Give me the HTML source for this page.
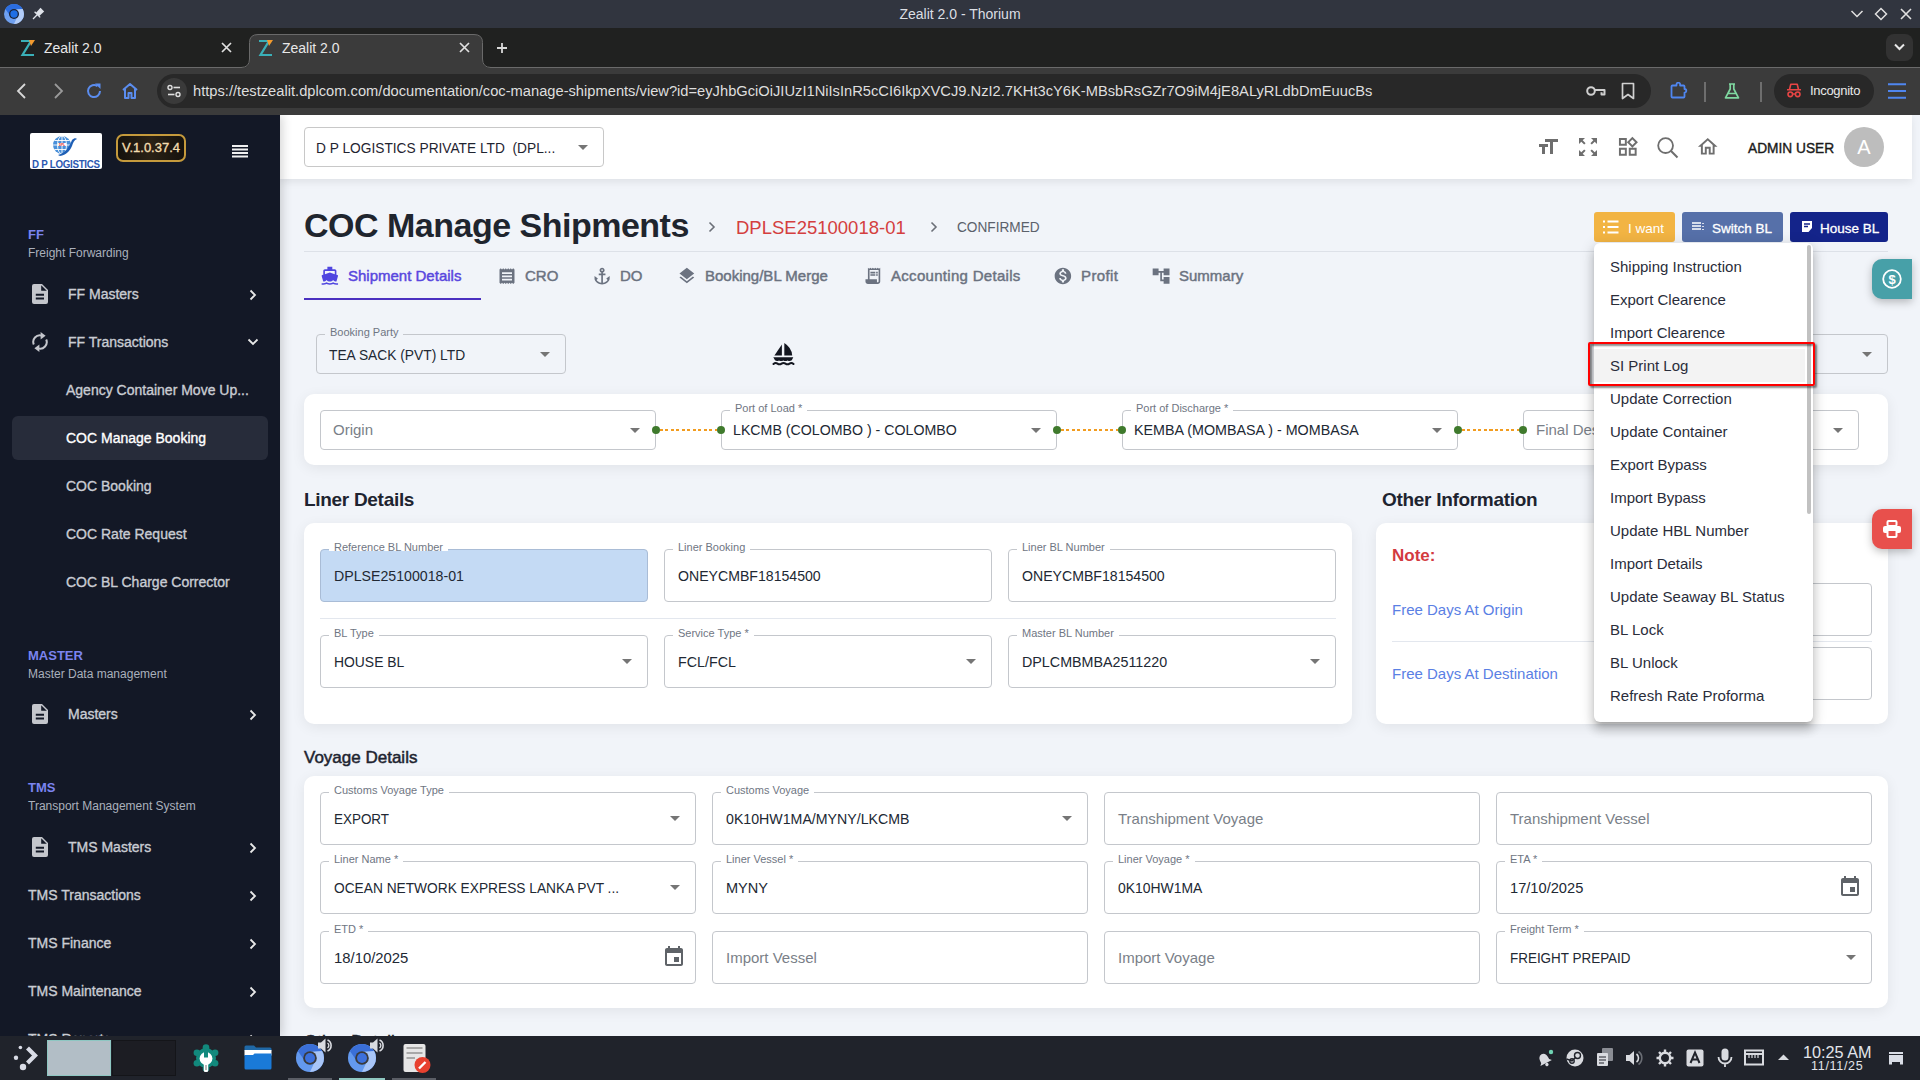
<!DOCTYPE html>
<html><head><meta charset="utf-8">
<style>
*{box-sizing:border-box;margin:0;padding:0}
html,body{width:1920px;height:1080px;overflow:hidden;background:#f1f4f9;font-family:"Liberation Sans",sans-serif}
.a{position:absolute}
svg{display:block}
/* chrome */
#titlebar{left:0;top:0;width:1920px;height:28px;background:#31353f}
#tabbar{left:0;top:28px;width:1920px;height:40px;background:#202120}
#toolbar{left:0;top:68px;width:1920px;height:47px;background:#3b3b3b}
#content{left:0;top:115px;width:1920px;height:921px;background:#f1f4f9;overflow:hidden}
#taskbar{left:0;top:1036px;width:1920px;height:44px;background:#20232b}
.wt{color:#e6e6e6;font-size:13px}
/* sidebar */
#sidebar{left:0;top:0;width:280px;height:921px;background:#131826;box-shadow:2px 0 10px rgba(0,0,0,0.18)}
.sec{left:28px;color:#7b84f0;font-weight:bold;font-size:13px}
.secsub{left:28px;color:#aab0bc;font-size:12px}
.si{color:#c9ccd3;font-size:14px;white-space:nowrap;-webkit-text-stroke:0.35px currentColor}
.chev{left:249px}
/* main */
.lbl{font-size:11px;color:#6f7683;background:#fff;padding:0 4px;white-space:nowrap}
.fld{border:1px solid #c4c7cc;border-radius:4px;background:#fff}
.val{font-size:15px;color:#212833;white-space:nowrap}
.ph{font-size:15px;color:#7a7f88;white-space:nowrap}
.caret{width:0;height:0;border-left:6px solid transparent;border-right:6px solid transparent;border-top:6px solid #666}
.card{background:#fff;border-radius:10px}
.h2{font-size:19px;font-weight:bold;color:#1e2430;white-space:nowrap}
.tab{font-size:15px;color:#6b7280;white-space:nowrap;-webkit-text-stroke:0.45px currentColor}
.mi{left:16px;font-size:15px;color:#2a2d3a;white-space:nowrap}
</style></head><body>

<!-- ================= TITLE BAR ================= -->
<div id="titlebar" class="a">
  <svg class="a" style="left:4px;top:4px" width="20" height="20" viewBox="0 0 28 28"><circle cx="14" cy="14" r="14" fill="#6fa0f0"/><path d="M26.1 7 A14 14 0 0 0 1.9 7 L10.7 19.7 L14 14 L10.7 8.3 Z" fill="#2b6de0"/><path d="M26.1 7 A14 14 0 0 1 14 28 L20.6 14 L14 14 L10.7 8.3 Z" fill="#b3cdf8"/><circle cx="14" cy="14" r="7" fill="#1a2233"/><circle cx="14" cy="14" r="5.2" fill="#1f6fe5"/></svg>
  <svg class="a" style="left:32px;top:7px" width="13" height="13" viewBox="0 0 13 13"><path d="M8.5 0.8 L12.2 4.5 L7 9.2 L3.8 6 Z" fill="#dfe3ea"/><path d="M2.6 4.8 L8.2 10.4 M5.2 7.8 L1 12" stroke="#dfe3ea" stroke-width="1.3"/></svg>
  <div class="a wt" style="left:0;width:1920px;top:6px;text-align:center;font-size:14px;color:#dcdfe4">Zealit 2.0 - Thorium</div>
  <svg class="a" style="left:1850px;top:8px" width="14" height="12" viewBox="0 0 14 12"><path d="M1.5 3 L7 8.5 L12.5 3" stroke="#e0e0e0" stroke-width="1.5" fill="none"/></svg>
  <svg class="a" style="left:1874px;top:7px" width="14" height="14" viewBox="0 0 14 14"><path d="M7 1.5 L12.5 7 L7 12.5 L1.5 7 Z" stroke="#e0e0e0" stroke-width="1.5" fill="none"/></svg>
  <svg class="a" style="left:1899px;top:7px" width="14" height="14" viewBox="0 0 14 14"><path d="M2 2 L12 12 M12 2 L2 12" stroke="#e0e0e0" stroke-width="1.6" fill="none"/></svg>
</div>

<!-- ================= TAB BAR ================= -->
<div id="tabbar" class="a">
  <svg class="a" style="left:0;top:0" width="1920" height="40" viewBox="0 0 1920 40"><path d="M0 39.5 H242" stroke="#6a6a6a" stroke-width="1"/><path d="M490 39.5 H1920" stroke="#6a6a6a" stroke-width="1"/><path d="M241 40 Q250 40 250 31 V14.5 Q250 6.5 258 6.5 H474 Q482 6.5 482 14.5 V31 Q482 40 491 40 Z" fill="#3b3b3b"/><path d="M241 39.5 Q249.5 39.5 249.5 31 V14.5 Q249.5 6.5 258 6.5 H474 Q482.5 6.5 482.5 14.5 V31 Q482.5 39.5 491 39.5" stroke="#6a6a6a" stroke-width="1" fill="none"/></svg>
  <!-- favicon Z -->
  <svg class="a" style="left:20px;top:11px" width="16" height="18" viewBox="0 0 16 18"><path d="M1 2 H11 L2.5 16 H14" stroke="#3ab0b8" stroke-width="2.2" fill="none"/><path d="M9 1 H15 L11 7 Z" fill="#f29a2e"/></svg>
  <div class="a wt" style="left:44px;top:12px;font-size:14px;color:#e8e8e8">Zealit 2.0</div>
  <svg class="a" style="left:220px;top:13px" width="13" height="13" viewBox="0 0 13 13"><path d="M2 2 L11 11 M11 2 L2 11" stroke="#e0e0e0" stroke-width="1.7"/></svg>
  <svg class="a" style="left:258px;top:11px" width="16" height="18" viewBox="0 0 16 18"><path d="M1 2 H11 L2.5 16 H14" stroke="#3ab0b8" stroke-width="2.2" fill="none"/><path d="M9 1 H15 L11 7 Z" fill="#f29a2e"/></svg>
  <div class="a wt" style="left:282px;top:12px;font-size:14px;color:#e8e8e8">Zealit 2.0</div>
  <svg class="a" style="left:458px;top:13px" width="13" height="13" viewBox="0 0 13 13"><path d="M2 2 L11 11 M11 2 L2 11" stroke="#e0e0e0" stroke-width="1.7"/></svg>
  <svg class="a" style="left:497px;top:15px" width="10" height="10" viewBox="0 0 10 10"><path d="M5 0 V10 M0 5 H10" stroke="#d8d8d8" stroke-width="1.8"/></svg>
  <div class="a" style="left:1886px;top:6px;width:27px;height:27px;background:#323232;border-radius:8px"></div>
  <svg class="a" style="left:1893px;top:14px" width="13" height="10" viewBox="0 0 13 10"><path d="M2 2.5 L6.5 7 L11 2.5" stroke="#e8e8e8" stroke-width="2" fill="none"/></svg>
</div>

<!-- ================= TOOLBAR ================= -->
<div id="toolbar" class="a">
  <svg class="a" style="left:14px;top:14px" width="16" height="18" viewBox="0 0 16 18"><path d="M11 2 L4 9 L11 16" stroke="#d8d8d8" stroke-width="1.8" fill="none"/></svg>
  <svg class="a" style="left:50px;top:14px" width="16" height="18" viewBox="0 0 16 18"><path d="M5 2 L12 9 L5 16" stroke="#9a9a9a" stroke-width="1.8" fill="none"/></svg>
  <svg class="a" style="left:84px;top:13px" width="20" height="20" viewBox="0 0 20 20"><path d="M16 10 A6 6 0 1 1 13.5 5.2" stroke="#5b8def" stroke-width="2" fill="none"/><path d="M11 2.5 H16.5 V8 Z" fill="#5b8def"/></svg>
  <svg class="a" style="left:120px;top:13px" width="20" height="20" viewBox="0 0 20 20"><path d="M3 9 L10 3 L17 9 M5 8 V17 H8.5 V12 H11.5 V17 H15 V8" stroke="#5b8def" stroke-width="2" fill="none" stroke-linejoin="round"/></svg>
  <div class="a" style="left:157px;top:6px;width:1494px;height:34px;background:#282828;border-radius:17px"></div>
  <div class="a" style="left:161px;top:10px;width:26px;height:26px;background:#3a3a3a;border-radius:13px"></div>
  <svg class="a" style="left:166px;top:15px" width="16" height="16" viewBox="0 0 16 16"><circle cx="4" cy="4.5" r="2" stroke="#e0e0e0" stroke-width="1.4" fill="none"/><path d="M7.5 4.5 H14" stroke="#e0e0e0" stroke-width="1.6"/><circle cx="12" cy="11.5" r="2" stroke="#e0e0e0" stroke-width="1.4" fill="none"/><path d="M2 11.5 H8.5" stroke="#e0e0e0" stroke-width="1.6"/></svg>
  <div class="a" style="left:193px;top:15px;font-size:14.7px;color:#dedede;white-space:nowrap">https://testzealit.dplcom.com/documentation/coc-manage-shipments/view?id=eyJhbGciOiJIUzI1NiIsInR5cCI6IkpXVCJ9.NzI2.7KHt3cY6K-MBsbRsGZr7O9iM4jE8ALyRLdbDmEuucBs</div>
  <svg class="a" style="left:1586px;top:17px" width="20" height="12" viewBox="0 0 20 12"><circle cx="5" cy="6" r="3.8" stroke="#d0d0d0" stroke-width="2" fill="none"/><path d="M8.8 5 H18.5 V9.5 H15.5 V7.2" stroke="#d0d0d0" stroke-width="2" fill="none" stroke-linejoin="round"/></svg>
  <svg class="a" style="left:1621px;top:14px" width="14" height="18" viewBox="0 0 14 18"><path d="M1.5 1.5 H12.5 V16.5 L7 12.5 L1.5 16.5 Z" stroke="#d0d0d0" stroke-width="1.7" fill="none" stroke-linejoin="round"/></svg>
  <svg class="a" style="left:1670px;top:14px" width="18" height="17" viewBox="0 0 18 17"><path d="M2.5 3.5 H6.5 V2.5 A1.8 1.8 0 0 1 10.1 2.5 V3.5 H13.5 A1.2 1.2 0 0 1 14.5 4.5 V7 A1.8 1.8 0 0 1 14.5 10.6 V14.5 A1.2 1.2 0 0 1 13.5 15.5 H2.5 A1.2 1.2 0 0 1 1.5 14.5 V4.5 A1.2 1.2 0 0 1 2.5 3.5 Z" stroke="#4f86f0" stroke-width="1.8" fill="none" stroke-linejoin="round"/></svg>
  <div class="a" style="left:1704px;top:14px;width:2px;height:20px;background:#6e6e6e"></div>
  <svg class="a" style="left:1724px;top:15px" width="16" height="16" viewBox="0 0 16 16"><path d="M5 1 H11 M6.2 1 V6 L1.5 14.8 H14.5 L9.8 6 V1 M3.8 10.5 H12.2" stroke="#7fd8a0" stroke-width="1.7" fill="none" stroke-linejoin="round"/></svg>
  <div class="a" style="left:1760px;top:14px;width:2px;height:20px;background:#6e6e6e"></div>
  <div class="a" style="left:1774px;top:6px;width:100px;height:34px;background:#282828;border-radius:17px"></div>
  <svg class="a" style="left:1786px;top:15px" width="16" height="15" viewBox="0 0 16 15"><path d="M3.5 6.5 L4.8 1.2 H11.2 L12.5 6.5 M1 6.7 H15" stroke="#e84545" stroke-width="1.6" fill="none" stroke-linejoin="round"/><circle cx="4.3" cy="11.3" r="2.3" stroke="#e84545" stroke-width="1.6" fill="none"/><circle cx="11.7" cy="11.3" r="2.3" stroke="#e84545" stroke-width="1.6" fill="none"/><path d="M6.6 11 H9.4" stroke="#e84545" stroke-width="1.4"/></svg>
  <div class="a" style="left:1810px;top:15px;font-size:13px;line-height:15px;color:#e8e8e8;letter-spacing:-0.3px">Incognito</div>
  <svg class="a" style="left:1888px;top:14px" width="18" height="18" viewBox="0 0 18 18"><path d="M0 2.2 H18 M0 9 H18 M0 15.7 H18" stroke="#4f86f0" stroke-width="2"/></svg>
</div>

<!-- ================= CONTENT ================= -->
<div id="content" class="a">

  <!-- HEADER -->
  <div class="a" style="left:280px;top:0;width:1632px;height:64px;background:#fff;box-shadow:0 3px 8px rgba(0,0,0,0.08)"></div>
  <div class="a fld" style="left:304px;top:12px;width:300px;height:40px;border-color:#c8c8c8;border-radius:4px"></div>
  <div class="a val" style="left:316px;top:25px;font-size:15px;line-height:15px;color:#1f2430;transform:scaleX(0.915);transform-origin:0 0">D P LOGISTICS PRIVATE LTD &nbsp;(DPL...</div>
  <div class="a caret" style="left:578px;top:30px;border-top-color:#757575;border-left-width:5px;border-right-width:5px;border-top-width:5px"></div>
  <!-- header icons -->
  <svg class="a" style="left:1536px;top:20px" width="24" height="24" viewBox="0 0 24 24"><path fill="#6e6e6e" d="M9 4v3h5v12h3V7h5V4H9zm-6 8h3v7h3v-7h3V9H3v3z"/></svg>
  <svg class="a" style="left:1576px;top:20px" width="24" height="24" viewBox="0 0 24 24"><path fill="#6e6e6e" d="M15 3l2.3 2.3-2.89 2.87 1.42 1.42L18.7 6.7 21 9V3zM3 9l2.3-2.3 2.87 2.89 1.42-1.42L6.7 5.3 9 3H3zm6 12l-2.3-2.3 2.89-2.87-1.42-1.42L5.3 17.3 3 15v6zm12-6l-2.3 2.3-2.87-2.89-1.42 1.42 2.89 2.87L15 21h6z"/></svg>
  <svg class="a" style="left:1616px;top:20.1px" width="23.6" height="23.6" viewBox="0 0 24 24"><path fill="#6e6e6e" d="M16.66 4.52l2.83 2.83-2.83 2.83-2.830-2.83 2.83-2.83M9 5v4H5V5h4m10 10v4h-4v-4h4M9 15v4H5v-4h4m7.66-13.31L11 7.34 16.66 13l5.66-5.66-5.66-5.65zM11 3H3v8h8V3zm10 10h-8v8h8v-8zm-10 0H3v8h8v-8z"/></svg>
  <svg class="a" style="left:1657px;top:21.5px" width="22" height="22" viewBox="0 0 22 22"><circle cx="8.6" cy="8.6" r="7.4" stroke="#6e6e6e" stroke-width="1.8" fill="none"/><path d="M13.8 13.8 L20.5 20.5" stroke="#6e6e6e" stroke-width="2"/></svg>
  <svg class="a" style="left:1696.3px;top:20.1px" width="23.5" height="23.5" viewBox="0 0 24 24"><path fill="#6e6e6e" d="M12 5.69l5 4.5V18h-2v-6H9v6H7v-7.81l5-4.5M12 3L2 12h3v8h6v-6h2v6h6v-8h3L12 3z"/></svg>
  <div class="a" style="left:1748px;top:25px;font-size:15px;line-height:15px;color:#1a1a1a;white-space:nowrap;transform:scaleX(0.915);transform-origin:0 0;-webkit-text-stroke:0.4px currentColor">ADMIN USER</div>
  <div class="a" style="left:1844px;top:12px;width:40px;height:40px;border-radius:20px;background:#bdbdbd;color:#fff;font-size:20px;line-height:40px;text-align:center">A</div>

  <!-- TITLE -->
  <div class="a" style="left:304px;top:93px;font-size:34px;line-height:34px;font-weight:bold;color:#1f252e;white-space:nowrap;letter-spacing:-0.5px">COC Manage Shipments</div>
  <svg class="a" style="left:708px;top:106px" width="8" height="12" viewBox="0 0 8 12"><path d="M1.5 1.5 L6 6 L1.5 10.5" stroke="#6b6f78" stroke-width="1.6" fill="none"/></svg>
  <div class="a" style="left:736px;top:103px;font-size:18.5px;line-height:19px;color:#d43f3f;white-space:nowrap">DPLSE25100018-01</div>
  <svg class="a" style="left:930px;top:106px" width="8" height="12" viewBox="0 0 8 12"><path d="M1.5 1.5 L6 6 L1.5 10.5" stroke="#6b6f78" stroke-width="1.6" fill="none"/></svg>
  <div class="a" style="left:957px;top:104px;font-size:15.5px;line-height:15px;color:#5b616b;white-space:nowrap;transform:scaleX(0.881);transform-origin:0 0">CONFIRMED</div>
  <div class="a" style="left:304px;top:136px;width:1584px;height:1px;background:#dde1e8"></div>

  <!-- action buttons -->
  <div class="a" style="left:1594px;top:97px;width:81px;height:30px;background:#f2b443;border-radius:3px"></div>
  <svg class="a" style="left:1603px;top:105px" width="16" height="14" viewBox="0 0 16 14"><path d="M0 1.5 H2 M0 7 H2 M0 12.5 H2 M4.5 1.5 H15.5 M4.5 7 H15.5 M4.5 12.5 H15.5" stroke="#fff" stroke-width="1.8"/></svg>
  <div class="a" style="left:1628px;top:106px;font-size:13.5px;line-height:15px;color:#fff;white-space:nowrap">I want</div>
  <div class="a" style="left:1682px;top:97px;width:101px;height:30px;background:#5670a9;border-radius:3px"></div>
  <svg class="a" style="left:1692px;top:107px" width="13" height="10" viewBox="0 0 13 10"><path d="M0 1 H9 M0 4 H9 M0 7 H9 M11 1 V2 M11 4 V5 M11 7 V8" stroke="#fff" stroke-width="1.5"/></svg>
  <div class="a" style="left:1712px;top:106px;font-size:13.5px;line-height:15px;color:#fff;white-space:nowrap;-webkit-text-stroke:0.3px currentColor">Switch BL</div>
  <div class="a" style="left:1790px;top:97px;width:98px;height:30px;background:#14248a;border-radius:3px"></div>
  <svg class="a" style="left:1801px;top:105px" width="12" height="13" viewBox="0 0 12 13"><path d="M1 1 H11 V8 L7.5 12 H1 Z" fill="#fff"/><path d="M3 4 H9 M3 6.5 H7" stroke="#14248a" stroke-width="1.3"/></svg>
  <div class="a" style="left:1820px;top:106px;font-size:13.5px;line-height:15px;color:#fff;white-space:nowrap;-webkit-text-stroke:0.3px currentColor">House BL</div>

  <!-- TABS -->
  <svg class="a" style="left:319.9px;top:151.1px" width="19.7" height="19.7" viewBox="0 0 24 24"><path fill="#4f45e0" d="M20 21c-1.39 0-2.78-.47-4-1.32-2.44 1.71-5.56 1.71-8 0C6.78 20.53 5.39 21 4 21H2v2h2c1.38 0 2.74-.35 4-.99 2.52 1.29 5.48 1.29 8 0 1.26.65 2.62.99 4 .99h2v-2h-2zM3.95 19H4c1.6 0 3.02-.88 4-2 .98 1.12 2.4 2 4 2s3.02-.88 4-2c.98 1.12 2.4 2 4 2h.05l1.89-6.68c.08-.26.06-.54-.06-.78s-.34-.42-.6-.5L20 10.62V6c0-1.1-.9-2-2-2h-3V1H9v3H6c-1.1 0-2 .9-2 2v4.62l-1.29.42c-.26.08-.48.26-.6.5s-.15.52-.06.78L3.95 19zM6 6h12v3.97L12 8 6 9.97V6z"/></svg>
  <div class="a tab" style="left:348px;top:152.5px;line-height:15px;color:#5846de">Shipment Details</div>
  <div class="a" style="left:304px;top:183px;width:177px;height:2px;background:#4a30c0"></div>

  <svg class="a" style="left:499.2px;top:152.7px" width="16" height="16.3" viewBox="0 0 16 16.3"><path d="M0.5 1.5 L1.75 0.3 L3 1.5 L4.25 0.3 L5.5 1.5 L6.75 0.3 L8 1.5 L9.25 0.3 L10.5 1.5 L11.75 0.3 L13 1.5 L14.25 0.3 L15.5 1.5 V14.8 L14.25 16 L13 14.8 L11.75 16 L10.5 14.8 L9.25 16 L8 14.8 L6.75 16 L5.5 14.8 L4.25 16 L3 14.8 L1.75 16 L0.5 14.8 Z" fill="#6b7280"/><path d="M3 5.1 H13 M3 8.4 H13 M3 11.6 H13" stroke="#f1f4f9" stroke-width="1.6"/></svg>
  <div class="a tab" style="left:525px;top:152.5px;line-height:15px">CRO</div>
  <svg class="a" style="left:591.8px;top:151.2px" width="20.2" height="20.2" viewBox="0 0 24 24"><path fill="#6b7280" d="M17,15l1.55,1.55c-0.96,1.69-3.33,3.04-5.55,3.37V11h3V9h-3V7.82C14.16,7.4,15,6.3,15,5c0-1.65-1.35-3-3-3S9,3.35,9,5c0,1.3,0.84,2.4,2,2.82V9H8v2h3v8.92c-2.22-0.33-4.59-1.68-5.55-3.37L7,15l-4-3v3c0,3.88,4.92,7,9,7s9-3.12,9-7v-3L17,15z M12,4c0.55,0,1,0.45,1,1s-0.45,1-1,1s-1-0.45-1-1S11.45,4,12,4z"/></svg>
  <div class="a tab" style="left:620px;top:152.5px;line-height:15px">DO</div>
  <svg class="a" style="left:677.1px;top:151.3px" width="19.7" height="19.7" viewBox="0 0 24 24"><path fill="#6b7280" d="M11.99 18.54l-7.37-5.73L3 14.07l9 7 9-7-1.63-1.27-7.38 5.74zM12 16l7.36-5.73L21 9l-9-7-9 7 1.63 1.27L12 16z"/></svg>
  <div class="a tab" style="left:705px;top:152.5px;line-height:15px">Booking/BL Merge</div>
  <svg class="a" style="left:862.7px;top:151.1px" width="19.7" height="19.7" viewBox="0 0 24 24"><path fill="#6b7280" d="M19.5 3.5L18 2l-1.5 1.5L15 2l-1.5 1.5L12 2l-1.5 1.5L9 2 7.5 3.5 6 2v14H3v3c0 1.66 1.34 3 3 3h12c1.66 0 3-1.34 3-3V2l-1.5 1.5zM19 19c0 .55-.45 1-1 1s-1-.45-1-1v-3H8V5h11v14z M9 7h6v2H9zM16 7h2v2h-2zM9 10h6v2H9zM16 10h2v2h-2z"/></svg>
  <div class="a tab" style="left:891px;top:152.5px;line-height:15px;letter-spacing:0.3px">Accounting Details</div>
  <svg class="a" style="left:1053px;top:151.2px" width="19.8" height="19.8" viewBox="0 0 24 24"><path fill="#6b7280" d="M12 2C6.48 2 2 6.48 2 12s4.48 10 10 10 10-4.48 10-10S17.52 2 12 2zm1.41 16.09V20h-2.67v-1.93c-1.710-.36-3.16-1.46-3.27-3.4h1.96c.1 1.05.82 1.87 2.65 1.87 1.96 0 2.4-.98 2.4-1.59 0-.83-.44-1.61-2.67-2.14-2.48-.6-4.18-1.62-4.18-3.67 0-1.72 1.39-2.84 3.11-3.21V4h2.67v1.95c1.86.45 2.79 1.86 2.85 3.39H14.3c-.05-1.11-.64-1.870-2.22-1.87-1.5 0-2.4.68-2.4 1.64 0 .84.65 1.39 2.67 1.91s4.18 1.39 4.18 3.91c-.01 1.83-1.38 2.83-3.12 3.160z"/></svg>
  <div class="a tab" style="left:1081px;top:152.5px;line-height:15px;letter-spacing:0.4px">Profit</div>
  <svg class="a" style="left:1151.1px;top:150.7px" width="20.2" height="20.2" viewBox="0 0 24 24"><path fill="#6b7280" d="M22 11V3h-7v3H9V3H2v8h7V8h2v10h4v3h7v-8h-7v3h-2V8h2v3z"/></svg>
  <div class="a tab" style="left:1179px;top:152.5px;line-height:15px">Summary</div>
<div class="a fld" style="left:316px;top:219px;width:250px;height:40px;background:transparent;border-color:#c4c7cc"></div><div class="a" style="left:325px;top:218px;width:78.484375px;height:3px;background:#f1f4f9"></div><div class="a lbl" style="left:325px;top:211.2px;line-height:12px;background:transparent;padding:0 5px">Booking Party</div><div class="a val" style="left:329px;top:232.0px;line-height:16px;transform:scaleX(0.919);transform-origin:0 0">TEA SACK (PVT) LTD</div><div class="a caret" style="left:540px;top:236.5px;border-left-width:5px;border-right-width:5px;border-top-width:5px;border-top-color:#757575"></div>
<svg class="a" style="left:772px;top:227px" width="23" height="24" viewBox="0 0 23 24"><path d="M9.9 2.6 L2.4 13.4 H9.9 Z" fill="#12151f"/><path d="M12.3 1.1 Q19.5 5.5 20.2 13.4 H12.3 Z" fill="#12151f"/><path d="M1.3 15.2 H21.3 L19.8 18.2 Q17.7 19.6 15.6 18.4 Q13.5 19.6 11.3 18.4 Q9.1 19.6 7 18.4 Q4.9 19.6 3 18.3 Z" fill="#12151f"/><path d="M1.5 22 Q3.5 20.2 5.5 21.6 T9.5 21.6 T13.5 21.6 T17.5 21.6 T21.5 22" stroke="#12151f" stroke-width="2" fill="none" stroke-linecap="round"/></svg>
<div class="a fld" style="left:1638px;top:219px;width:250px;height:40px;background:transparent;border-color:#c4c7cc"></div><div class="a caret" style="left:1862px;top:236.5px;border-left-width:5px;border-right-width:5px;border-top-width:5px;border-top-color:#757575"></div>
<div class="a card" style="left:304px;top:279px;width:1584px;height:71px;box-shadow:0 3px 14px rgba(0,0,0,0.07)"></div>
<div class="a fld" style="left:320px;top:295px;width:336px;height:40px;background:#fff;border-color:#c4c7cc"></div><div class="a ph" style="left:333px;top:306.5px;line-height:16px">Origin</div><div class="a caret" style="left:630px;top:312.5px;border-left-width:5px;border-right-width:5px;border-top-width:5px;border-top-color:#757575"></div>
<div class="a fld" style="left:721px;top:295px;width:336px;height:40px;background:#fff;border-color:#c4c7cc"></div><div class="a" style="left:730px;top:294px;width:77.28125px;height:3px;background:#fff"></div><div class="a lbl" style="left:730px;top:287.2px;line-height:12px;background:transparent;padding:0 5px">Port of Load *</div><div class="a val" style="left:733px;top:307.0px;line-height:16px;transform:scaleX(0.9454);transform-origin:0 0">LKCMB (COLOMBO ) - COLOMBO</div><div class="a caret" style="left:1031px;top:312.5px;border-left-width:5px;border-right-width:5px;border-top-width:5px;border-top-color:#757575"></div>
<div class="a fld" style="left:1122px;top:295px;width:336px;height:40px;background:#fff;border-color:#c4c7cc"></div><div class="a" style="left:1131px;top:294px;width:102.328125px;height:3px;background:#fff"></div><div class="a lbl" style="left:1131px;top:287.2px;line-height:12px;background:transparent;padding:0 5px">Port of Discharge *</div><div class="a val" style="left:1134px;top:307.0px;line-height:16px;transform:scaleX(0.953);transform-origin:0 0">KEMBA (MOMBASA ) - MOMBASA</div><div class="a caret" style="left:1432px;top:312.5px;border-left-width:5px;border-right-width:5px;border-top-width:5px;border-top-color:#757575"></div>
<div class="a fld" style="left:1523px;top:295px;width:336px;height:40px;background:#fff;border-color:#c4c7cc"></div><div class="a ph" style="left:1536px;top:306.5px;line-height:16px">Final Destination</div><div class="a caret" style="left:1833px;top:312.5px;border-left-width:5px;border-right-width:5px;border-top-width:5px;border-top-color:#757575"></div>
<div class="a" style="left:660px;top:314px;width:57px;height:2px;background:repeating-linear-gradient(90deg,#f29c1f 0 3px,transparent 3px 5.5px)"></div>
<div class="a" style="left:652px;top:311px;width:8px;height:8px;border-radius:4px;background:#3f7a2c"></div>
<div class="a" style="left:717px;top:311px;width:8px;height:8px;border-radius:4px;background:#3f7a2c"></div>
<div class="a" style="left:1061px;top:314px;width:57px;height:2px;background:repeating-linear-gradient(90deg,#f29c1f 0 3px,transparent 3px 5.5px)"></div>
<div class="a" style="left:1053px;top:311px;width:8px;height:8px;border-radius:4px;background:#3f7a2c"></div>
<div class="a" style="left:1118px;top:311px;width:8px;height:8px;border-radius:4px;background:#3f7a2c"></div>
<div class="a" style="left:1462px;top:314px;width:57px;height:2px;background:repeating-linear-gradient(90deg,#f29c1f 0 3px,transparent 3px 5.5px)"></div>
<div class="a" style="left:1454px;top:311px;width:8px;height:8px;border-radius:4px;background:#3f7a2c"></div>
<div class="a" style="left:1519px;top:311px;width:8px;height:8px;border-radius:4px;background:#3f7a2c"></div>
<div class="a h2" style="left:304px;top:375px;line-height:19px;letter-spacing:-0.3px">Liner Details</div>
<div class="a card" style="left:304px;top:408px;width:1048px;height:201px;box-shadow:0 3px 14px rgba(0,0,0,0.07)"></div>
<div class="a fld" style="left:320px;top:434px;width:328px;height:53px;background:#c4daf4;border-color:#a9bcd6"></div><div class="a" style="left:329px;top:433px;width:119.046875px;height:3px;background:#fff"></div><div class="a lbl" style="left:329px;top:426.2px;line-height:12px;background:transparent;padding:0 5px">Reference BL Number</div><div class="a val" style="left:334px;top:452.5px;line-height:16px;transform:scaleX(0.9445);transform-origin:0 0">DPLSE25100018-01</div>
<div class="a fld" style="left:664px;top:434px;width:328px;height:53px;background:#fff;border-color:#c4c7cc"></div><div class="a" style="left:673px;top:433px;width:77.28125px;height:3px;background:#fff"></div><div class="a lbl" style="left:673px;top:426.2px;line-height:12px;background:transparent;padding:0 5px">Liner Booking</div><div class="a val" style="left:678px;top:452.5px;line-height:16px;transform:scaleX(0.9405);transform-origin:0 0">ONEYCMBF18154500</div>
<div class="a fld" style="left:1008px;top:434px;width:328px;height:53px;background:#fff;border-color:#c4c7cc"></div><div class="a" style="left:1017px;top:433px;width:92.75px;height:3px;background:#fff"></div><div class="a lbl" style="left:1017px;top:426.2px;line-height:12px;background:transparent;padding:0 5px">Liner BL Number</div><div class="a val" style="left:1022px;top:452.5px;line-height:16px;transform:scaleX(0.9405);transform-origin:0 0">ONEYCMBF18154500</div>
<div class="a" style="left:320px;top:503px;width:1016px;height:1px;background:#e3e7ee"></div>
<div class="a fld" style="left:320px;top:520px;width:328px;height:53px;background:#fff;border-color:#c4c7cc"></div><div class="a" style="left:329px;top:519px;width:49.765625px;height:3px;background:#fff"></div><div class="a lbl" style="left:329px;top:512.2px;line-height:12px;background:transparent;padding:0 5px">BL Type</div><div class="a val" style="left:334px;top:538.5px;line-height:16px;transform:scaleX(0.926);transform-origin:0 0">HOUSE BL</div><div class="a caret" style="left:622px;top:544.0px;border-left-width:5px;border-right-width:5px;border-top-width:5px;border-top-color:#757575"></div>
<div class="a fld" style="left:664px;top:520px;width:328px;height:53px;background:#fff;border-color:#c4c7cc"></div><div class="a" style="left:673px;top:519px;width:80.734375px;height:3px;background:#fff"></div><div class="a lbl" style="left:673px;top:512.2px;line-height:12px;background:transparent;padding:0 5px">Service Type *</div><div class="a val" style="left:678px;top:538.5px;line-height:16px;transform:scaleX(0.9513);transform-origin:0 0">FCL/FCL</div><div class="a caret" style="left:966px;top:544.0px;border-left-width:5px;border-right-width:5px;border-top-width:5px;border-top-color:#757575"></div>
<div class="a fld" style="left:1008px;top:520px;width:328px;height:53px;background:#fff;border-color:#c4c7cc"></div><div class="a" style="left:1017px;top:519px;width:101.90625px;height:3px;background:#fff"></div><div class="a lbl" style="left:1017px;top:512.2px;line-height:12px;background:transparent;padding:0 5px">Master BL Number</div><div class="a val" style="left:1022px;top:538.5px;line-height:16px;transform:scaleX(0.9532);transform-origin:0 0">DPLCMBMBA2511220</div><div class="a caret" style="left:1310px;top:544.0px;border-left-width:5px;border-right-width:5px;border-top-width:5px;border-top-color:#757575"></div>
<div class="a h2" style="left:1382px;top:375px;line-height:19px;letter-spacing:-0.3px">Other Information</div>
<div class="a card" style="left:1376px;top:408px;width:512px;height:201px;box-shadow:0 3px 14px rgba(0,0,0,0.07)"></div>
<div class="a" style="left:1392px;top:432px;font-size:17px;line-height:17px;font-weight:bold;color:#d33a3f">Note:</div>
<div class="a" style="left:1392px;top:487px;font-size:15px;line-height:16px;color:#5a80e4;white-space:nowrap">Free Days At Origin</div>
<div class="a" style="left:1392px;top:526px;width:480px;height:1px;background:#e3e7ee"></div>
<div class="a" style="left:1392px;top:551px;font-size:15px;line-height:16px;color:#5a80e4;white-space:nowrap">Free Days At Destination</div>
<div class="a fld" style="left:1630px;top:468px;width:242px;height:53px"></div>
<div class="a fld" style="left:1630px;top:532px;width:242px;height:53px"></div>
<div class="a" style="left:304px;top:634px;font-size:17px;line-height:17px;color:#1e2430;white-space:nowrap;-webkit-text-stroke:0.5px currentColor">Voyage Details</div>
<div class="a card" style="left:304px;top:661px;width:1584px;height:232px;box-shadow:0 3px 14px rgba(0,0,0,0.07)"></div>
<div class="a fld" style="left:320px;top:677px;width:376px;height:53px;background:#fff;border-color:#c4c7cc"></div><div class="a" style="left:329px;top:676px;width:119.875px;height:3px;background:#fff"></div><div class="a lbl" style="left:329px;top:669.2px;line-height:12px;background:transparent;padding:0 5px">Customs Voyage Type</div><div class="a val" style="left:334px;top:695.5px;line-height:16px;transform:scaleX(0.8964);transform-origin:0 0">EXPORT</div><div class="a caret" style="left:670px;top:701.0px;border-left-width:5px;border-right-width:5px;border-top-width:5px;border-top-color:#757575"></div>
<div class="a fld" style="left:712px;top:677px;width:376px;height:53px;background:#fff;border-color:#c4c7cc"></div><div class="a" style="left:721px;top:676px;width:93.15625px;height:3px;background:#fff"></div><div class="a lbl" style="left:721px;top:669.2px;line-height:12px;background:transparent;padding:0 5px">Customs Voyage</div><div class="a val" style="left:726px;top:695.5px;line-height:16px;transform:scaleX(0.9448);transform-origin:0 0">0K10HW1MA/MYNY/LKCMB</div><div class="a caret" style="left:1062px;top:701.0px;border-left-width:5px;border-right-width:5px;border-top-width:5px;border-top-color:#757575"></div>
<div class="a fld" style="left:1104px;top:677px;width:376px;height:53px;background:#fff;border-color:#c4c7cc"></div><div class="a ph" style="left:1118px;top:695.5px;line-height:16px">Transhipment Voyage</div>
<div class="a fld" style="left:1496px;top:677px;width:376px;height:53px;background:#fff;border-color:#c4c7cc"></div><div class="a ph" style="left:1510px;top:695.5px;line-height:16px">Transhipment Vessel</div>
<div class="a fld" style="left:320px;top:746px;width:376px;height:53px;background:#fff;border-color:#c4c7cc"></div><div class="a" style="left:329px;top:745px;width:74.203125px;height:3px;background:#fff"></div><div class="a lbl" style="left:329px;top:738.2px;line-height:12px;background:transparent;padding:0 5px">Liner Name *</div><div class="a val" style="left:334px;top:764.5px;line-height:16px;transform:scaleX(0.9152);transform-origin:0 0">OCEAN NETWORK EXPRESS LANKA PVT ...</div><div class="a caret" style="left:670px;top:770.0px;border-left-width:5px;border-right-width:5px;border-top-width:5px;border-top-color:#757575"></div>
<div class="a fld" style="left:712px;top:746px;width:376px;height:53px;background:#fff;border-color:#c4c7cc"></div><div class="a" style="left:721px;top:745px;width:77.265625px;height:3px;background:#fff"></div><div class="a lbl" style="left:721px;top:738.2px;line-height:12px;background:transparent;padding:0 5px">Liner Vessel *</div><div class="a val" style="left:726px;top:764.5px;line-height:16px;transform:scaleX(0.9685);transform-origin:0 0">MYNY</div>
<div class="a fld" style="left:1104px;top:746px;width:376px;height:53px;background:#fff;border-color:#c4c7cc"></div><div class="a" style="left:1113px;top:745px;width:81.5625px;height:3px;background:#fff"></div><div class="a lbl" style="left:1113px;top:738.2px;line-height:12px;background:transparent;padding:0 5px">Liner Voyage *</div><div class="a val" style="left:1118px;top:764.5px;line-height:16px;transform:scaleX(0.9278);transform-origin:0 0">0K10HW1MA</div>
<div class="a fld" style="left:1496px;top:746px;width:376px;height:53px;background:#fff;border-color:#c4c7cc"></div><div class="a" style="left:1505px;top:745px;width:37.3125px;height:3px;background:#fff"></div><div class="a lbl" style="left:1505px;top:738.2px;line-height:12px;background:transparent;padding:0 5px">ETA *</div><div class="a val" style="left:1510px;top:764.5px;line-height:16px;transform:scaleX(0.9765);transform-origin:0 0">17/10/2025</div><svg class="a" style="left:1837.7px;top:760.0px" width="24" height="24" viewBox="0 0 24 24"><path fill="#5f6368" d="M17 12h-5v5h5v-5zM16 1v2H8V1H6v2H5c-1.11 0-1.99.9-1.99 2L3 19c0 1.1.89 2 2 2h14c1.1 0 2-.9 2-2V5c0-1.1-.9-2-2-2h-1V1h-2zm3 18H5V8h14v11z"/></svg>
<div class="a fld" style="left:320px;top:816px;width:376px;height:53px;background:#fff;border-color:#c4c7cc"></div><div class="a" style="left:329px;top:815px;width:39.34375px;height:3px;background:#fff"></div><div class="a lbl" style="left:329px;top:808.2px;line-height:12px;background:transparent;padding:0 5px">ETD *</div><div class="a val" style="left:334px;top:834.5px;line-height:16px;transform:scaleX(0.9901);transform-origin:0 0">18/10/2025</div><svg class="a" style="left:661.7px;top:830.0px" width="24" height="24" viewBox="0 0 24 24"><path fill="#5f6368" d="M17 12h-5v5h5v-5zM16 1v2H8V1H6v2H5c-1.11 0-1.99.9-1.99 2L3 19c0 1.1.89 2 2 2h14c1.1 0 2-.9 2-2V5c0-1.1-.9-2-2-2h-1V1h-2zm3 18H5V8h14v11z"/></svg>
<div class="a fld" style="left:712px;top:816px;width:376px;height:53px;background:#fff;border-color:#c4c7cc"></div><div class="a ph" style="left:726px;top:834.5px;line-height:16px">Import Vessel</div>
<div class="a fld" style="left:1104px;top:816px;width:376px;height:53px;background:#fff;border-color:#c4c7cc"></div><div class="a ph" style="left:1118px;top:834.5px;line-height:16px">Import Voyage</div>
<div class="a fld" style="left:1496px;top:816px;width:376px;height:53px;background:#fff;border-color:#c4c7cc"></div><div class="a" style="left:1505px;top:815px;width:78.875px;height:3px;background:#fff"></div><div class="a lbl" style="left:1505px;top:808.2px;line-height:12px;background:transparent;padding:0 5px">Freight Term *</div><div class="a val" style="left:1510px;top:834.5px;line-height:16px;transform:scaleX(0.8962);transform-origin:0 0">FREIGHT PREPAID</div><div class="a caret" style="left:1846px;top:840.0px;border-left-width:5px;border-right-width:5px;border-top-width:5px;border-top-color:#757575"></div>
<div class="a" style="left:304px;top:918px;font-size:17px;line-height:17px;color:#1e2430;white-space:nowrap;-webkit-text-stroke:0.5px currentColor">Other Details</div>
<div class="a" style="left:1872px;top:144px;width:40px;height:40px;background:#47a0a8;border-radius:10px 0 0 10px;box-shadow:0 3px 8px rgba(0,0,0,0.25)"></div>
<svg class="a" style="left:1882px;top:154px" width="20" height="20" viewBox="0 0 20 20"><circle cx="10" cy="10" r="8.8" stroke="#fff" stroke-width="1.8" fill="none"/><text x="10" y="14.6" font-size="13" font-weight="bold" fill="#fff" text-anchor="middle" font-family="Liberation Sans">$</text></svg>
<div class="a" style="left:1872px;top:394px;width:40px;height:40px;background:#e8504c;border-radius:10px 0 0 10px;box-shadow:0 3px 8px rgba(0,0,0,0.25)"></div>
<svg class="a" style="left:1882px;top:404px" width="20" height="20" viewBox="0 0 20 20"><rect x="5.5" y="2" width="9" height="5" rx="1" stroke="#fff" stroke-width="2" fill="none"/><rect x="1" y="7" width="18" height="7" rx="2" fill="#fff"/><rect x="5.5" y="11" width="9" height="7" rx="1" stroke="#fff" stroke-width="2" fill="#e8504c"/></svg>
<div class="a" style="left:1594px;top:128px;width:219px;height:479px;background:#fff;border-radius:6px;box-shadow:0 5px 5px -3px rgba(0,0,0,.2),0 8px 10px 1px rgba(0,0,0,.14),0 3px 14px 2px rgba(0,0,0,.12)"><div class="a" style="left:0px;top:106px;width:211px;height:33px;background:#f3f3f3"></div><div class="a mi" style="top:16px;line-height:16px">Shipping Instruction</div><div class="a mi" style="top:49px;line-height:16px">Export Clearence</div><div class="a mi" style="top:82px;line-height:16px">Import Clearence</div><div class="a mi" style="top:115px;line-height:16px">SI Print Log</div><div class="a mi" style="top:148px;line-height:16px">Update Correction</div><div class="a mi" style="top:181px;line-height:16px">Update Container</div><div class="a mi" style="top:214px;line-height:16px">Export Bypass</div><div class="a mi" style="top:247px;line-height:16px">Import Bypass</div><div class="a mi" style="top:280px;line-height:16px">Update HBL Number</div><div class="a mi" style="top:313px;line-height:16px">Import Details</div><div class="a mi" style="top:346px;line-height:16px">Update Seaway BL Status</div><div class="a mi" style="top:379px;line-height:16px">BL Lock</div><div class="a mi" style="top:412px;line-height:16px">BL Unlock</div><div class="a mi" style="top:445px;line-height:16px">Refresh Rate Proforma</div><div class="a" style="left:213px;top:2px;width:4px;height:269px;background:#c1c1c1;border-radius:2px"></div></div>
<div class="a" style="left:1588px;top:227px;width:227px;height:44px;border:2px solid #ff0000;border-radius:2px;box-shadow:2px 2px 2px rgba(0,0,0,0.45), inset 2px 2px 2px rgba(0,0,0,0.45)"></div>
  <!-- SIDEBAR -->
  <div id="sidebar" class="a">
    <!-- logo -->
    <div class="a" style="left:30px;top:18px;width:72px;height:36px;background:#fff;border-radius:2px"></div>
    <svg class="a" style="left:52px;top:20px" width="30" height="22" viewBox="0 0 30 22"><circle cx="10" cy="10" r="9" fill="#4a90d9"/><path d="M1 10 H19 M10 1 V19 M2.5 5.5 H17.5 M2.5 14.5 H17.5" stroke="#fff" stroke-width="0.9"/><ellipse cx="10" cy="10" rx="4.5" ry="9" stroke="#fff" stroke-width="0.9" fill="none"/><path d="M6 20 C14 18 18 10 20 5 C22 3 24 3 25 4 C22 5 21 8 20 11 C18 16 14 20 8 21 Z" fill="#1f5fb5"/><rect x="6" y="8" width="8" height="3" fill="#fff"/><text x="10" y="10.8" font-size="3" fill="#d22" text-anchor="middle" font-family="Liberation Sans" font-weight="bold">DPL</text></svg>
    <div class="a" style="left:32px;top:43px;font-size:10.5px;line-height:12px;font-weight:bold;color:#2b57b0;white-space:nowrap;transform:scaleX(0.93);transform-origin:0 0;letter-spacing:-0.3px">D P LOGISTICS</div>
    <!-- version -->
    <div class="a" style="left:116px;top:19px;width:70px;height:28px;border:2px solid #c59a3c;border-radius:7px;background:linear-gradient(90deg,#15120d,#2a2115 50%,#15120d)"></div>
    <div class="a" style="left:116px;top:19px;width:70px;height:28px;line-height:28px;text-align:center;font-size:13px;color:#f3dcae;-webkit-text-stroke:0.35px currentColor">V.1.0.37.4</div>
    <!-- hamburger -->
    <svg class="a" style="left:232px;top:30px" width="16" height="13" viewBox="0 0 16 13"><path d="M0 1 H16 M0 4.5 H16 M0 8 H16 M0 11.5 H16" stroke="#f0f0f0" stroke-width="1.8"/></svg>

    <div class="a sec" style="top:113px;font-size:13px;line-height:14px">FF</div>
    <div class="a secsub" style="top:132px;font-size:12px;line-height:13px">Freight Forwarding</div>

    <svg class="a" style="left:32px;top:169px" width="16" height="20" viewBox="0 0 16 20"><path d="M2 0 H10 L16 6 V18 A2 2 0 0 1 14 20 H2 A2 2 0 0 1 0 18 V2 A2 2 0 0 1 2 0 Z" fill="#c4c6cc"/><path d="M9.2 1.2 V6.8 H14.8 Z" fill="#131826"/><path d="M3.8 10.7 H12 M3.8 14.6 H12" stroke="#131826" stroke-width="2"/></svg>
    <div class="a si" style="left:68px;top:172px;line-height:14px">FF Masters</div>
    <svg class="a chev" style="top:174px" width="8" height="12" viewBox="0 0 8 12"><path d="M1.5 1.5 L6 6 L1.5 10.5" stroke="#e8e8e8" stroke-width="1.8" fill="none"/></svg>

    <svg class="a" style="left:32px;top:216px" width="16" height="22" viewBox="0 0 16 22"><path d="M1.8 13.5 A6.6 6.6 0 0 1 9.8 4.6" stroke="#c4c6cc" stroke-width="2" fill="none"/><path d="M8.6 1 L13.6 4.8 L8.6 8.4 Z" fill="#c4c6cc"/><path d="M14.2 8.5 A6.6 6.6 0 0 1 6.2 17.4" stroke="#c4c6cc" stroke-width="2" fill="none"/><path d="M7.4 13.6 L2.4 17.2 L7.4 21 Z" fill="#c4c6cc"/></svg>
    <div class="a si" style="left:68px;top:220px;line-height:14px">FF Transactions</div>
    <svg class="a chev" style="left:247px;top:223px" width="12" height="8" viewBox="0 0 12 8"><path d="M1.5 1.5 L6 6 L10.5 1.5" stroke="#e8e8e8" stroke-width="1.8" fill="none"/></svg>

    <div class="a si" style="left:66px;top:268px;line-height:14px">Agency Container Move Up...</div>
    <div class="a" style="left:12px;top:301px;width:256px;height:44px;background:#272c3a;border-radius:6px"></div>
    <div class="a si" style="left:66px;top:316px;line-height:14px;color:#fff">COC Manage Booking</div>
    <div class="a si" style="left:66px;top:364px;line-height:14px">COC Booking</div>
    <div class="a si" style="left:66px;top:412px;line-height:14px">COC Rate Request</div>
    <div class="a si" style="left:66px;top:460px;line-height:14px">COC BL Charge Corrector</div>

    <div class="a sec" style="top:534px;font-size:13px;line-height:14px">MASTER</div>
    <div class="a secsub" style="top:553px;font-size:12px;line-height:13px">Master Data management</div>
    <svg class="a" style="left:32px;top:589px" width="16" height="20" viewBox="0 0 16 20"><path d="M2 0 H10 L16 6 V18 A2 2 0 0 1 14 20 H2 A2 2 0 0 1 0 18 V2 A2 2 0 0 1 2 0 Z" fill="#c4c6cc"/><path d="M9.2 1.2 V6.8 H14.8 Z" fill="#131826"/><path d="M3.8 10.7 H12 M3.8 14.6 H12" stroke="#131826" stroke-width="2"/></svg>
    <div class="a si" style="left:68px;top:592px;line-height:14px">Masters</div>
    <svg class="a chev" style="top:594px" width="8" height="12" viewBox="0 0 8 12"><path d="M1.5 1.5 L6 6 L1.5 10.5" stroke="#e8e8e8" stroke-width="1.8" fill="none"/></svg>

    <div class="a sec" style="top:666px;font-size:13px;line-height:14px">TMS</div>
    <div class="a secsub" style="top:685px;font-size:12px;line-height:13px">Transport Management System</div>
    <svg class="a" style="left:32px;top:722px" width="16" height="20" viewBox="0 0 16 20"><path d="M2 0 H10 L16 6 V18 A2 2 0 0 1 14 20 H2 A2 2 0 0 1 0 18 V2 A2 2 0 0 1 2 0 Z" fill="#c4c6cc"/><path d="M9.2 1.2 V6.8 H14.8 Z" fill="#131826"/><path d="M3.8 10.7 H12 M3.8 14.6 H12" stroke="#131826" stroke-width="2"/></svg>
    <div class="a si" style="left:68px;top:725px;line-height:14px">TMS Masters</div>
    <svg class="a chev" style="top:727px" width="8" height="12" viewBox="0 0 8 12"><path d="M1.5 1.5 L6 6 L1.5 10.5" stroke="#e8e8e8" stroke-width="1.8" fill="none"/></svg>

    <div class="a si" style="left:28px;top:773px;line-height:14px">TMS Transactions</div>
    <svg class="a chev" style="top:775px" width="8" height="12" viewBox="0 0 8 12"><path d="M1.5 1.5 L6 6 L1.5 10.5" stroke="#e8e8e8" stroke-width="1.8" fill="none"/></svg>
    <div class="a si" style="left:28px;top:821px;line-height:14px">TMS Finance</div>
    <svg class="a chev" style="top:823px" width="8" height="12" viewBox="0 0 8 12"><path d="M1.5 1.5 L6 6 L1.5 10.5" stroke="#e8e8e8" stroke-width="1.8" fill="none"/></svg>
    <div class="a si" style="left:28px;top:869px;line-height:14px">TMS Maintenance</div>
    <svg class="a chev" style="top:871px" width="8" height="12" viewBox="0 0 8 12"><path d="M1.5 1.5 L6 6 L1.5 10.5" stroke="#e8e8e8" stroke-width="1.8" fill="none"/></svg>
    <div class="a si" style="left:28px;top:917px;line-height:14px">TMS Reports</div>
    <svg class="a chev" style="top:919px" width="8" height="12" viewBox="0 0 8 12"><path d="M1.5 1.5 L6 6 L1.5 10.5" stroke="#e8e8e8" stroke-width="1.8" fill="none"/></svg>
  </div>
</div>

<!-- ================= TASKBAR ================= -->
<div id="taskbar" class="a">
  <svg class="a" style="left:12px;top:9px" width="28" height="26" viewBox="0 0 28 26"><circle cx="8.4" cy="2.5" r="1.8" fill="#d9dce6"/><circle cx="4" cy="12.8" r="2.2" fill="#d9dce6"/><circle cx="11" cy="22" r="3.2" fill="#d9dce6"/><path d="M15.5 3 L23 10.5 L15.5 18" stroke="#d9dce6" stroke-width="4.2" fill="none"/></svg>
  <div class="a" style="left:47px;top:4px;width:64px;height:36px;background:#b2bec6;border:1px solid #8ec7c2"></div>
  <div class="a" style="left:112px;top:4px;width:64px;height:36px;background:#1c1d23;border:1px solid #141519"></div>
  <svg class="a" style="left:192px;top:8px" width="28" height="30" viewBox="0 0 28 30"><circle cx="14" cy="14" r="10" fill="#12897d"/><circle cx="14.00" cy="3.50" r="3.3" fill="#12897d"/><circle cx="23.09" cy="8.75" r="3.3" fill="#12897d"/><circle cx="23.09" cy="19.25" r="3.3" fill="#12897d"/><circle cx="14.00" cy="24.50" r="3.3" fill="#12897d"/><circle cx="4.91" cy="19.25" r="3.3" fill="#12897d"/><circle cx="4.91" cy="8.75" r="3.3" fill="#12897d"/><circle cx="14" cy="14.5" r="6.4" fill="#fff"/><rect x="12" y="5" width="4" height="8.5" fill="#12897d"/><rect x="11.8" y="18" width="4.4" height="10" rx="1.6" fill="#fff"/><rect x="13.3" y="21" width="1.4" height="5" fill="#9a9a9a"/></svg>
  <svg class="a" style="left:244px;top:9px" width="28" height="25" viewBox="0 0 28 25"><path d="M2 0.5 H10 L12 2.5 H26 A1.5 1.5 0 0 1 27.5 4 V6 H0.5 V2 A1.5 1.5 0 0 1 2 0.5 Z" fill="#1f68a6"/><rect x="0.5" y="5" width="27" height="5.5" fill="#fff"/><path d="M0.5 10 H9 L10.5 8.5 H27.5 V23 A1.5 1.5 0 0 1 26 24.5 H2 A1.5 1.5 0 0 1 0.5 23 Z" fill="#1a7ad8"/></svg>
  <svg class="a" style="left:296px;top:8px" width="28" height="28" viewBox="0 0 28 28"><circle cx="14" cy="14" r="14" fill="#6399ee"/><path d="M26.1 7 A14 14 0 0 0 1.9 7 L10.7 19.7 L14 14 L10.7 8.3 Z" fill="#3a6fd8"/><path d="M26.1 7 A14 14 0 0 1 14 28 L20.6 14 L14 14 L10.7 8.3 Z" fill="#a8c5f7"/><circle cx="14" cy="14" r="6.8" fill="#3a3a3a"/><circle cx="14" cy="14" r="5" fill="#3c70dc"/></svg>
  <svg class="a" style="left:318px;top:2px" width="16" height="15" viewBox="0 0 16 15"><path d="M0 4.5 H3 L7.5 0.5 V14.5 L3 10.5 H0 Z" fill="#d9dbe0"/><path d="M9.5 2 A6 6 0 0 1 9.5 13" stroke="#d9dbe0" stroke-width="1.6" fill="none"/><path d="M9.5 5 A3 3 0 0 1 9.5 10" stroke="#d9dbe0" stroke-width="1.4" fill="none"/></svg>
  <svg class="a" style="left:348px;top:8px" width="28" height="28" viewBox="0 0 28 28"><circle cx="14" cy="14" r="14" fill="#6399ee"/><path d="M26.1 7 A14 14 0 0 0 1.9 7 L10.7 19.7 L14 14 L10.7 8.3 Z" fill="#3a6fd8"/><path d="M26.1 7 A14 14 0 0 1 14 28 L20.6 14 L14 14 L10.7 8.3 Z" fill="#a8c5f7"/><circle cx="14" cy="14" r="6.8" fill="#3a3a3a"/><circle cx="14" cy="14" r="5" fill="#3c70dc"/></svg>
  <svg class="a" style="left:370px;top:2px" width="16" height="15" viewBox="0 0 16 15"><path d="M0 4.5 H3 L7.5 0.5 V14.5 L3 10.5 H0 Z" fill="#d9dbe0"/><path d="M9.5 2 A6 6 0 0 1 9.5 13" stroke="#d9dbe0" stroke-width="1.6" fill="none"/><path d="M9.5 5 A3 3 0 0 1 9.5 10" stroke="#d9dbe0" stroke-width="1.4" fill="none"/></svg>
  <svg class="a" style="left:403px;top:8px" width="29" height="29" viewBox="0 0 29 29"><rect x="0.5" y="0" width="22" height="28" rx="2" fill="#e6e6e6"/><path d="M3.5 4 H19.5 M3.5 9 H19.5 M3.5 14 H12" stroke="#a8a8a8" stroke-width="1.8"/><circle cx="19.5" cy="21" r="8" fill="#e8412f"/><path d="M16 24.5 L22.5 18" stroke="#fff" stroke-width="2.4"/></svg>
  <div class="a" style="left:288px;top:42px;width:44px;height:2px;background:#5b5e66"></div>
  <div class="a" style="left:339px;top:42px;width:46px;height:2px;background:#8fc7c0"></div>
  <div class="a" style="left:392px;top:42px;width:44px;height:2px;background:#5b5e66"></div>
  <!-- tray -->
  <svg class="a" style="left:1535px;top:13px" width="19" height="18" viewBox="0 0 19 18"><g transform="rotate(-28 9 10)"><path d="M4.5 12.5 Q4.2 5 9 4.6 Q13.8 5 13.5 12.5 L15.5 14.6 H2.5 Z" fill="#d9dbe0"/><circle cx="9" cy="16.2" r="1.7" fill="#d9dbe0"/></g><circle cx="16" cy="3" r="2.2" fill="#6fd3b3"/></svg>
  <svg class="a" style="left:1566px;top:13px" width="18" height="18" viewBox="0 0 18 18"><circle cx="9" cy="9" r="8.5" fill="#d9dbe0"/><circle cx="11.5" cy="6.5" r="3" stroke="#20232b" stroke-width="1.4" fill="none"/><circle cx="6" cy="12" r="2.2" stroke="#20232b" stroke-width="1.4" fill="none"/><path d="M0.5 10 L6 12 L10 8" stroke="#20232b" stroke-width="1.4" fill="none"/></svg>
  <svg class="a" style="left:1596px;top:11px" width="18" height="20" viewBox="0 0 18 20"><rect x="6" y="1" width="11" height="13" rx="1" fill="#8a8d94"/><rect x="1" y="6" width="11" height="13" rx="1" fill="#d9dbe0"/><path d="M3 10 H10 M3 13 H10 M3 16 H8" stroke="#20232b" stroke-width="1.2"/></svg>
  <svg class="a" style="left:1625px;top:13px" width="18" height="18" viewBox="0 0 18 18"><path d="M1 6 H4.5 L9 2 V16 L4.5 12 H1 Z" fill="#d9dbe0"/><path d="M11.5 5 A5 5 0 0 1 11.5 13" stroke="#d9dbe0" stroke-width="1.6" fill="none"/><path d="M13.5 2.5 A8 8 0 0 1 13.5 15.5" stroke="#6a6d74" stroke-width="1.6" fill="none"/></svg>
  <svg class="a" style="left:1656px;top:13px" width="18" height="18" viewBox="0 0 18 18"><circle cx="9" cy="9" r="5.2" stroke="#d9dbe0" stroke-width="2.4" fill="none"/><path d="M9 0.5 V3 M9 15 V17.5 M0.5 9 H3 M15 9 H17.5 M3 3 L4.8 4.8 M13.2 13.2 L15 15 M3 15 L4.8 13.2 M13.2 4.8 L15 3" stroke="#d9dbe0" stroke-width="2.4"/></svg>
  <svg class="a" style="left:1686px;top:13px" width="18" height="18" viewBox="0 0 18 18"><rect x="0.5" y="0.5" width="17" height="17" rx="2" fill="#d9dbe0"/><path d="M4.5 14 L9 3.5 L13.5 14 M6.2 10.5 H11.8" stroke="#20232b" stroke-width="2" fill="none"/></svg>
  <svg class="a" style="left:1716px;top:12px" width="18" height="20" viewBox="0 0 18 20"><rect x="5.5" y="0.5" width="7" height="12" rx="3.5" fill="#d9dbe0"/><path d="M2.5 9 A6.5 6.5 0 0 0 15.5 9 M9 15.5 V19" stroke="#d9dbe0" stroke-width="1.8" fill="none"/></svg>
  <svg class="a" style="left:1744px;top:13px" width="20" height="18" viewBox="0 0 20 18"><rect x="1" y="1.5" width="18" height="14" stroke="#d9dbe0" stroke-width="2" fill="none"/><path d="M1 5 H19" stroke="#d9dbe0" stroke-width="2"/><path d="M5 6 V9 M8 6 V9 M11 6 V9 M14 6 V9" stroke="#d9dbe0" stroke-width="1.2"/></svg>
  <svg class="a" style="left:1777px;top:17px" width="13" height="8" viewBox="0 0 13 8"><path d="M1 7 L6.5 1.5 L12 7 Z" fill="#d9dbe0"/></svg>
  <div class="a" style="left:1803px;top:7.6px;font-size:17px;line-height:17px;color:#e3e5ea;white-space:nowrap;transform:scaleX(0.955);transform-origin:0 0">10:25 AM</div>
  <div class="a" style="left:1811px;top:24.1px;font-size:12.5px;line-height:13px;color:#e3e5ea;white-space:nowrap;letter-spacing:0.7px">11/11/25</div>
  <svg class="a" style="left:1889px;top:16px" width="14" height="13" viewBox="0 0 14 13"><rect x="0" y="0" width="14" height="2" fill="#d9dde6"/><path d="M0 3 H14 V12.5 H11 V10 H3 V12.5 H0 Z" fill="#d9dde6"/></svg>
</div>

</body></html>
